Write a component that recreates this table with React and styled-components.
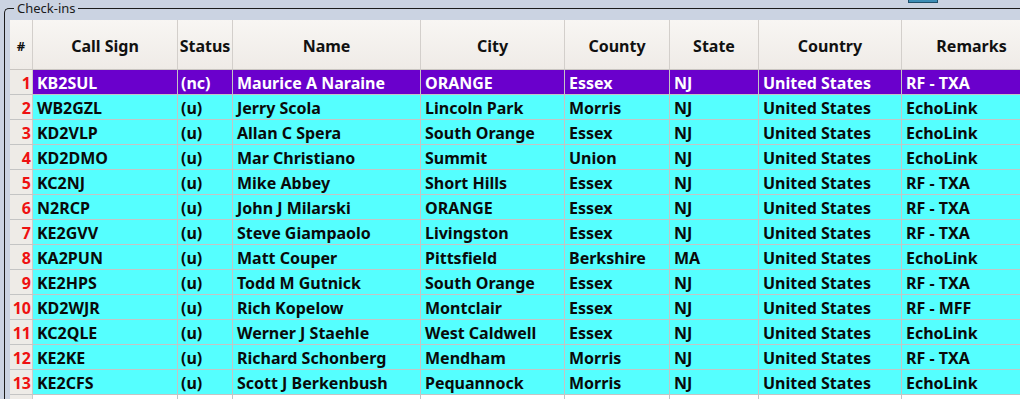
import React from "react";
import styled, { createGlobalStyle } from "styled-components";

const Global = createGlobalStyle`
  html, body { margin: 0; padding: 0; overflow: hidden; }
  body { background: #cbd3e2; font-family: "Noto Sans", "Open Sans", sans-serif; }
`;

const COLS = "23px 145px 55px 188px 144px 105px 89px 143px 140px";

const Page = styled.div`
  width: 1020px;
  height: 399px;
  overflow: hidden;
  display: flex;
  flex-direction: column;
`;

const TopStrip = styled.div`
  height: 0;
  display: flex;
  justify-content: flex-end;
  padding-right: 82px;
`;

const TopButton = styled.div`
  width: 28px;
  height: 2px;
  background: #3d8db5;
  border: 1px solid #1f4f6a;
  border-top: none;
`;

const Group = styled.div`
  margin-left: 4px;
  flex: 1;
  display: flex;
  flex-direction: column;
  min-height: 0;
`;

const TitleRow = styled.div`
  display: flex;
  height: 17px;
`;

const Corner = styled.div`
  width: 9px;
  margin-top: 8px;
  border-top: 1px solid #1c1c1c;
  border-left: 1px solid #1c1c1c;
  border-top-left-radius: 5px;
`;

const Legend = styled.div`
  padding: 0 2px 0 3px;
  font-size: 13px;
  line-height: 17px;
  color: #1a1a1a;
`;

const TitleLine = styled.div`
  flex: 1;
  margin-top: 8px;
  border-top: 1px solid #1c1c1c;
`;

const Body = styled.div`
  flex: 1;
  border-left: 1px solid #1c1c1c;
  padding: 3px 0 0 5px;
`;

const Table = styled.div`
  display: flex;
  flex-direction: column;
`;

const HeaderRow = styled.div`
  display: grid;
  grid-template-columns: ${COLS};
  height: 49px;
  background: linear-gradient(#f8f6f3, #efebe7);
  border-bottom: 1px solid #c9c5c1;
`;

const HeadCell = styled.div`
  display: flex;
  align-items: center;
  justify-content: center;
  padding-top: 2px;
  border-right: 1px solid #d3cfcb;
  font-weight: 700;
  font-size: ${(p) => (p.$small ? "13px" : "16px")};
  color: #111;
  white-space: nowrap;
  overflow: hidden;
`;

const Row = styled.div`
  display: grid;
  grid-template-columns: ${COLS};
  height: 24px;
  border-bottom: 1px solid #c4c4c4;
  background: ${(p) => p.$bg};
  color: ${(p) => p.$fg};
`;

const NumCell = styled.div`
  background: #eeebe7;
  border-right: 1px solid #cfcbc7;
  color: #ee1111;
  font-weight: 700;
  font-size: 16px;
  line-height: 22px;
  padding: 2px 1px 0 0;
  text-align: right;
`;

const Cell = styled.div`
  border-right: 1px solid #c4c4c4;
  font-weight: 700;
  font-size: 16px;
  line-height: 22px;
  padding-top: 2px;
  padding-left: ${(p) => p.$pad || 4}px;
  white-space: nowrap;
  overflow: hidden;
`;

const headers = ["Call Sign", "Status", "Name", "City", "County", "State", "Country", "Remarks"];

const rows = [
  ["KB2SUL", "(nc)", "Maurice A Naraine", "ORANGE", "Essex", "NJ", "United States", "RF - TXA"],
  ["WB2GZL", "(u)", "Jerry Scola", "Lincoln Park", "Morris", "NJ", "United States", "EchoLink"],
  ["KD2VLP", "(u)", "Allan C Spera", "South Orange", "Essex", "NJ", "United States", "EchoLink"],
  ["KD2DMO", "(u)", "Mar Christiano", "Summit", "Union", "NJ", "United States", "EchoLink"],
  ["KC2NJ", "(u)", "Mike Abbey", "Short Hills", "Essex", "NJ", "United States", "RF - TXA"],
  ["N2RCP", "(u)", "John J Milarski", "ORANGE", "Essex", "NJ", "United States", "RF - TXA"],
  ["KE2GVV", "(u)", "Steve Giampaolo", "Livingston", "Essex", "NJ", "United States", "RF - TXA"],
  ["KA2PUN", "(u)", "Matt Couper", "Pittsfield", "Berkshire", "MA", "United States", "EchoLink"],
  ["KE2HPS", "(u)", "Todd M Gutnick", "South Orange", "Essex", "NJ", "United States", "RF - TXA"],
  ["KD2WJR", "(u)", "Rich Kopelow", "Montclair", "Essex", "NJ", "United States", "RF - MFF"],
  ["KC2QLE", "(u)", "Werner J Staehle", "West Caldwell", "Essex", "NJ", "United States", "EchoLink"],
  ["KE2KE", "(u)", "Richard Schonberg", "Mendham", "Morris", "NJ", "United States", "RF - TXA"],
  ["KE2CFS", "(u)", "Scott J Berkenbush", "Pequannock", "Morris", "NJ", "United States", "EchoLink"],
];

const pads = [4, 3, 4, 4, 4, 4, 4, 4];

export default function App() {
  return (
    <Page>
      <Global />
      <TopStrip>
        <TopButton />
      </TopStrip>
      <Group>
        <TitleRow>
          <Corner />
          <Legend>Check-ins</Legend>
          <TitleLine />
        </TitleRow>
        <Body>
          <Table>
            <HeaderRow>
              <HeadCell $small>#</HeadCell>
              {headers.map((h) => (
                <HeadCell key={h}>{h}</HeadCell>
              ))}
            </HeaderRow>
            {rows.map((r, i) => (
              <Row key={i} $bg={i === 0 ? "#6a00cc" : "#55ffff"} $fg={i === 0 ? "#ffffff" : "#0a0a0a"}>
                <NumCell>{i + 1}</NumCell>
                {r.map((c, j) => (
                  <Cell key={j} $pad={pads[j]}>{c}</Cell>
                ))}
              </Row>
            ))}
            <Row $bg="#ffffff" $fg="#000">
              <NumCell />
              {pads.map((p, j) => (
                <Cell key={j} />
              ))}
            </Row>
          </Table>
        </Body>
      </Group>
    </Page>
  );
}
